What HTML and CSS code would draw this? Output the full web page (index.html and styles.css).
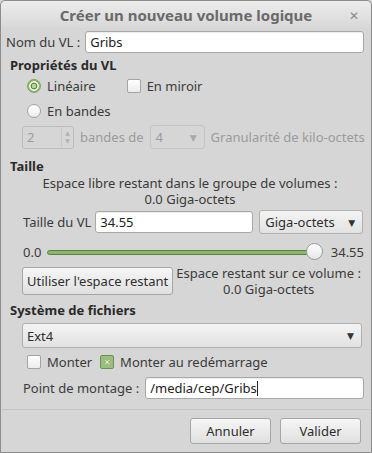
FILE: index.html
```html
<!DOCTYPE html>
<html lang="fr">
<head>
  <meta charset="UTF-8" />
  <title>Créer un nouveau volume logique</title>
  <link rel="stylesheet" href="styles.css">
</head>
<body>
  <div class="window">
    <div class="titlebar">
      <span class="title">Créer un nouveau volume logique</span>
      <span class="close">✕</span>
    </div>

    <div class="content">
      <div class="row name-row">
        <label>Nom du VL :</label>
        <div class="entry grow">Gribs</div>
      </div>

      <h3>Propriétés du VL</h3>
      <div class="section">
        <div class="row opts">
          <span class="radio checked"></span><span class="opt-label">Linéaire</span>
          <span class="check"></span><span>En miroir</span>
        </div>
        <div class="row opts">
          <span class="radio"></span><span>En bandes</span>
        </div>
        <div class="row stripes disabled">
          <div class="spin">
            <span>2</span>
            <span class="arrows"><i>▲</i><i>▼</i></span>
          </div>
          <span>bandes de</span>
          <div class="combo small">
            <span>4</span><span class="caret">▼</span>
          </div>
          <span>Granularité de kilo-octets</span>
        </div>
      </div>

      <h3>Taille</h3>
      <div class="section size">
        <p class="info">Espace libre restant dans le groupe de volumes :<br>0.0 Giga-octets</p>
        <div class="row size-row">
          <label>Taille du VL</label>
          <div class="entry size-entry">34.55</div>
          <div class="combo unit"><span>Giga-octets</span><span class="caret">▼</span></div>
        </div>
        <div class="row slider-row">
          <span>0.0</span>
          <div class="slider">
            <div class="track"></div>
            <div class="thumb"></div>
          </div>
          <span>34.55</span>
        </div>
        <div class="row rest-row">
          <button class="btn">Utiliser l'espace restant</button>
          <p class="info rest">Espace restant sur ce volume :<br>0.0 Giga-octets</p>
        </div>
      </div>

      <h3>Système de fichiers</h3>
      <div class="section">
        <div class="combo fs"><span>Ext4</span><span class="caret">▼</span></div>
        <div class="row opts mount">
          <span class="check"></span><span class="opt-label short">Monter</span>
          <span class="check on">✕</span><span>Monter au redémarrage</span>
        </div>
        <div class="row point-row">
          <label>Point de montage :</label>
          <div class="entry grow">/media/cep/Gribs<span class="cursor"></span></div>
        </div>
      </div>
    </div>

    <div class="actions">
      <button class="btn act">Annuler</button>
      <button class="btn act">Valider</button>
    </div>
  </div>
</body>
</html>
```
FILE: styles.css
```css
* {
  margin: 0;
  padding: 0;
  box-sizing: border-box;
}
body {
  background: #d6d6d6;
  font-family: "Noto Sans", "DejaVu Sans", sans-serif;
  font-size: 13px;
  color: #3a3a3a;
}
.window {
  width: 372px;
  height: 453px;
  border: 1px solid #8c8c8c;
  border-radius: 5px 5px 0 0;
  background: #d6d6d6;
  display: flex;
  flex-direction: column;
}
.titlebar {
  height: 27px;
  display: flex;
  align-items: center;
  justify-content: center;
  position: relative;
  background: linear-gradient(#ececec, #d8d8d8);
  border-radius: 5px 5px 0 0;
}
.title {
  font-weight: bold;
  font-size: 15px;
  color: #6a6a6a;
}
.close {
  position: absolute;
  right: 12px;
  top: 6px;
  font-size: 12px;
  font-weight: bold;
  color: #8a8a8a;
}
.content {
  padding: 3px 7px 0 5px;
  flex: 1;
}
.row {
  display: flex;
  align-items: center;
  white-space: nowrap;
}
.grow {
  flex: 1;
}
.name-row label {
  margin-right: 5px;
}
.entry {
  height: 22px;
  background: #fff;
  border: 1px solid #a8a8a8;
  border-radius: 3px;
  padding: 0 4px;
  line-height: 20px;
  color: #222;
  box-shadow: inset 0 1px 1px rgba(0,0,0,0.08);
}
.cursor {
  display: inline-block;
  width: 1px;
  height: 15px;
  background: #222;
  vertical-align: -3px;
}
h3 {
  font-size: 13px;
  font-weight: bold;
  color: #2a2a2a;
  margin: 4px 0 0 4px;
  height: 16px;
  line-height: 16px;
}
.section {
  padding-left: 16px;
  padding-bottom: 5px;
}
.section.size {
  padding-bottom: 2px;
}
.opts {
  height: 25px;
  padding-left: 5px;
}
.radio {
  width: 14px;
  height: 14px;
  border-radius: 50%;
  border: 1px solid #a3a3a3;
  background: linear-gradient(#fff, #ececec);
  margin-right: 6px;
  flex-shrink: 0;
}
.radio.checked {
  border-color: #7aa85a;
  background: radial-gradient(circle, #b7d39e 0 2px, #5f8a42 2.5px 3.2px, #fff 3.7px 4.5px, #8fb870 5px);
}
.check {
  width: 14px;
  height: 14px;
  border-radius: 2px;
  border: 1px solid #a3a3a3;
  background: linear-gradient(#fff, #ececec);
  margin-right: 6px;
  flex-shrink: 0;
}
.opt-label {
  margin-right: 31px;
}
.check.on {
  background: #9bc07d;
  border-color: #6c8f52;
  font-size: 8px;
  line-height: 12px;
  text-align: center;
  color: #fff;
  font-weight: bold;
  text-shadow: 0 0 1px #3d5a2a;
}
.disabled {
  color: #9b9b9b;
}
.stripes {
  margin-top: 2px;
  gap: 6px;
}
.spin {
  width: 52px;
  height: 23px;
  border: 1px solid #bdbdbd;
  border-radius: 3px;
  display: flex;
  align-items: center;
  justify-content: space-between;
  padding-left: 4px;
  flex-shrink: 0;
}
.arrows {
  display: flex;
  flex-direction: column;
  border-left: 1px solid #c8c8c8;
  width: 12px;
  height: 100%;
  justify-content: center;
  align-items: center;
}
.arrows i {
  font-style: normal;
  font-size: 6px;
  line-height: 8px;
  color: #b0b0b0;
}
.combo {
  height: 24px;
  border: 1px solid #b0b0b0;
  border-radius: 3px;
  background: linear-gradient(#f4f4f4, #e2e2e2);
  display: flex;
  align-items: center;
  justify-content: space-between;
  padding: 0 7px 0 5px;
  color: #2e2e2e;
  flex-shrink: 0;
}
.caret {
  font-size: 9px;
  color: #333;
}
.combo.small {
  width: 55px;
  border-color: #c4c4c4;
  background: #d6d6d6;
  color: #9b9b9b;
}
.combo.small .caret {
  color: #aaa;
}
.info {
  text-align: center;
  line-height: 16px;
  margin-top: 1px;
  padding-right: 6px;
}
.size-row {
  margin-top: 3px;
  height: 24px;
}
.size-row label {
  margin: 0 4px 0 1px;
}
.size-entry {
  width: 158px;
  height: 22px;
  margin-right: 6px;
}
.combo.unit {
  width: 104px;
}
.slider-row {
  margin-top: 4px;
  height: 28px;
  padding-left: 1px;
}
.slider {
  flex: 1;
  position: relative;
  height: 18px;
  margin: 0 8px 0 6px;
}
.track {
  position: absolute;
  left: 0;
  right: 10px;
  top: 7px;
  height: 5px;
  border: 1px solid #5f7f45;
  border-radius: 3px;
  background: #8fb56d;
}
.thumb {
  position: absolute;
  right: 0;
  top: 0;
  width: 17px;
  height: 17px;
  border-radius: 50%;
  border: 1px solid #9a9a9a;
  background: linear-gradient(#ffffff, #e6e6e6);
}
.rest-row {
  height: 30px;
  align-items: center;
}
.btn {
  font-family: inherit;
  font-size: 13px;
  color: #2e2e2e;
  height: 28px;
  border: 1px solid #a6a6a6;
  border-radius: 3px;
  background: linear-gradient(#f6f6f6, #e0e0e0);
  padding: 0 4px;
}
.rest {
  margin: 0;
  flex: 1;
  padding-right: 0;
}
.combo.fs {
  margin-top: 5px;
  height: 25px;
  padding-left: 4px;
  margin-right: 2px;
}
.mount {
  margin-top: 1px;
}
.opt-label.short {
  margin-right: 8px;
}
.point-row {
  margin-top: 3px;
}
.point-row label {
  margin: 0 6px 0 1px;
}
.actions {
  border-top: 1px solid #c4c4c4;
  margin: 0 1px;
  padding: 8px 9px 8px 0;
  display: flex;
  justify-content: flex-end;
  gap: 9px;
}
.btn.act {
  width: 81px;
  height: 26px;
}
```
